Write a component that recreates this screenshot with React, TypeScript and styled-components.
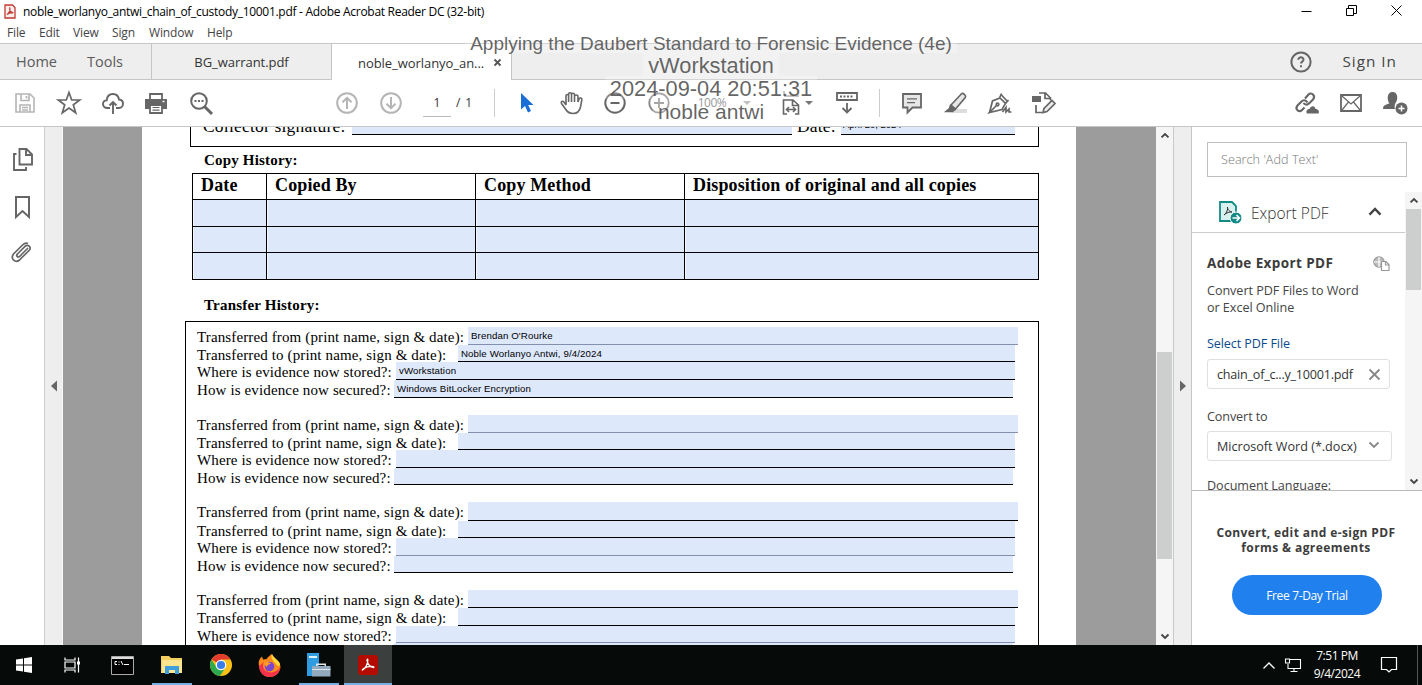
import React from "react";
import styled, { createGlobalStyle } from "styled-components";

const Global = createGlobalStyle`
  * { box-sizing: border-box; }
  html, body { margin: 0; padding: 0; background: #fff; overflow: hidden; }
  body { font-family: "Open Sans", "Noto Sans", sans-serif; }
  svg { display: block; flex: none; overflow: visible; }
`;

const ui = `"Open Sans", "Noto Sans", sans-serif`;
const serif = `"Liberation Serif", serif`;
const arial = `"Liberation Sans", sans-serif`;

const Window = styled.div`
  position: relative;
  width: 1422px;
  height: 685px;
  display: flex;
  flex-direction: column;
  background: #fff;
  overflow: hidden;
`;

const Label = styled.span<{ $size?: number; $ls?: number; $weight?: number; $color?: string; $drop?: number }>`
  font-size: ${(p) => p.$size ?? 12}px;
  letter-spacing: ${(p) => p.$ls ?? 0}px;
  font-weight: ${(p) => p.$weight ?? 400};
  color: ${(p) => p.$color ?? "#333"};
  padding-top: ${(p) => p.$drop ?? 0}px;
  white-space: nowrap;
  line-height: 1;
`;

/* ---------- title and menu ---------- */
const TitleBar = styled.header`
  height: 23px;
  display: flex;
  align-items: center;
  padding-left: 4px;
  gap: 7px;
`;
const WindowButtons = styled.div`
  display: flex;
  margin-left: auto;
  gap: 34px;
  padding-right: 20px;
  margin-top: -2px;
`;
const MenuBar = styled.nav`
  height: 20px;
  display: flex;
  align-items: center;
  padding-left: 7px;
`;
const MenuItem = styled.span<{ $w: number }>`
  width: ${(p) => p.$w}px;
  font-size: 12px;
  line-height: 1;
  letter-spacing: -0.15px;
  color: #444;
`;

/* ---------- tabs ---------- */
const TabBar = styled.div`
  height: 37px;
  display: flex;
  background: #eee;
  border-top: 1px solid #c6c6c6;
  border-bottom: 1px solid #c6c6c6;
`;
const FixedTabs = styled.div`
  width: 152px;
  display: flex;
  align-items: center;
  padding-left: 16px;
  gap: 30px;
  border-right: 1px solid #c6c6c6;
`;
const Tab = styled.div<{ $active?: boolean }>`
  position: relative;
  width: 180px;
  display: flex;
  align-items: center;
  justify-content: center;
  background: ${(p) => (p.$active ? "#fff" : "#eee")};
  border-right: 1px solid #c6c6c6;
  margin-bottom: ${(p) => (p.$active ? "-1px" : "0")};
  ${(p) => p.$active && "justify-content: flex-start; padding-left: 26px; gap: 10px;"}
`;
const Account = styled.div`
  margin-left: auto;
  display: flex;
  align-items: center;
  gap: 30px;
  padding-right: 25px;
`;

/* ---------- toolbar ---------- */
const Toolbar = styled.div`
  height: 47px;
  display: flex;
  align-items: center;
  padding-left: 3px;
  border-bottom: 1px solid #c6c6c6;
`;
const Slot = styled.div<{ $w?: number; $gap?: number }>`
  width: ${(p) => p.$w ?? 44}px;
  margin-left: ${(p) => p.$gap ?? 0}px;
  height: 46px;
  flex: none;
  display: flex;
  align-items: center;
  justify-content: center;
`;
const PageBox = styled.div`
  width: 28px;
  height: 27px;
  margin-left: 10px;
  display: flex;
  align-items: center;
  justify-content: center;
  border-bottom: 1px solid #bbb;
`;
const Divider = styled.div<{ $gap: number }>`
  width: 1px;
  height: 28px;
  margin-left: ${(p) => p.$gap}px;
  background: #ccc;
`;
const Caret = styled.i<{ $color?: string }>`
  border: 4px solid transparent;
  border-top: 4px solid ${(p) => p.$color ?? "#777"};
  border-bottom: 0;
`;

/* ---------- body ---------- */
const Body = styled.main`
  height: 518px;
  display: flex;
`;
const Rail = styled.aside`
  width: 45px;
  border-right: 1px solid #ccc;
  display: flex;
  flex-direction: column;
  align-items: center;
  padding-top: 21px;
  gap: 22px;
`;
const Gutter = styled.div<{ $side: "left" | "right" }>`
  width: 18px;
  background: #eee;
  border-${(p) => p.$side}: 1px solid ${(p) => (p.$side === "left" ? "#c9c9c9" : "#f8f8f8")};
  display: flex;
  align-items: center;
  justify-content: center;
`;
const Backdrop = styled.div`
  width: 1093px;
  padding: 0 80px 0 79px;
  background: #9c9c9c;
`;
const Paper = styled.div`
  height: 518px;
  background: #fff;
  overflow: hidden;
  font-family: ${serif};
  color: #000;
`;
const CollectorBox = styled.div`
  margin-left: 48px;
  width: 849px;
  height: 20px;
  border: 1px solid #000;
  border-top: 0;
  display: flex;
  padding-left: 12px;
`;
const CollectorText = styled.span<{ $w: number }>`
  width: ${(p) => p.$w}px;
  height: 19px;
  overflow: hidden;
  font-size: 17.5px;
  letter-spacing: 0.2px;
  line-height: 18px;
  margin-top: -10px;
  white-space: nowrap;
`;
const CollectorField = styled.span<{ $w: number }>`
  width: ${(p) => p.$w}px;
  height: 8px;
  overflow: hidden;
  background: #dde8fb;
  border-bottom: 1px solid #000;
  font: 9.5px/10px ${arial};
  margin-right: 5px;
  padding-left: 2px;
`;
const Shift = styled.span`
  display: block;
  margin-top: -7px;
`;
const SectionTitle = styled.h2<{ $h: number; $pad: number; $ls: number }>`
  margin: 0;
  height: ${(p) => p.$h}px;
  padding: ${(p) => p.$pad}px 0 0 62px;
  font-size: 15px;
  line-height: 17px;
  letter-spacing: ${(p) => p.$ls}px;
  font-weight: 700;
`;
const CopyTable = styled.div`
  margin-left: 50px;
  width: 847px;
  height: 107px;
  display: grid;
  grid-template-columns: 73px 208px 208px 353px;
  grid-template-rows: 25px 26px 25px 26px;
  gap: 1px;
  background: #000;
  border: 1px solid #000;
`;
const HeadCell = styled.div`
  background: #fff;
  padding-left: 8px;
  font-size: 18px;
  line-height: 22px;
  letter-spacing: 0.13px;
  font-weight: 700;
  white-space: nowrap;
`;
const FieldCell = styled.div`
  background: #dde8fb;
  border: 1px solid #f3f6fd;
  border-width: 0 0 0 1px;
`;
const TransferBox = styled.div`
  margin-left: 43px;
  width: 854px;
  height: 400px;
  border: 1px solid #000;
  padding: 5px 0 0 11px;
`;
const TransferGroup = styled.div`
  margin-bottom: 17px;
`;
const TransferRow = styled.div<{ $h: number }>`
  height: ${(p) => p.$h}px;
  display: flex;
`;
const TransferLabel = styled.span<{ $w: number; $ls: number }>`
  width: ${(p) => p.$w}px;
  flex: none;
  font-size: 15px;
  line-height: 20px;
  letter-spacing: ${(p) => p.$ls}px;
  white-space: nowrap;
`;
const TransferField = styled.span<{ $w: number; $soft?: boolean }>`
  width: ${(p) => p.$w}px;
  padding-left: 3px;
  background: #dde8fb;
  border-bottom: 1px solid ${(p) => (p.$soft ? "#8290ad" : "#000")};
  font: 9.7px/17px ${arial};
  letter-spacing: 0.11px;
  white-space: nowrap;
`;

/* ---------- scrollbars ---------- */
const Scroll = styled.div<{ $w: number; $h: number }>`
  width: ${(p) => p.$w}px;
  height: ${(p) => p.$h}px;
  flex: none;
  background: #f5f5f5;
  display: flex;
  flex-direction: column;
  align-items: center;
`;
const Thumb = styled.div<{ $top: number; $h: number }>`
  width: 15px;
  height: ${(p) => p.$h}px;
  margin-top: ${(p) => p.$top}px;
  background: #cdcfcf;
`;
const ScrollEnd = styled.div<{ $bottom?: boolean }>`
  height: 17px;
  display: flex;
  align-items: center;
  ${(p) => p.$bottom && "margin-top: auto;"}
`;

/* ---------- right panel ---------- */
const Panel = styled.aside`
  width: 231px;
  border-left: 1px solid #c6c6c6;
  background: #fff;
`;
const SearchBox = styled.div`
  width: 200px;
  height: 35px;
  margin: 15px 0 0 15px;
  padding-left: 13px;
  border: 1px solid #bfbfbf;
  display: flex;
  align-items: center;
`;
const PanelScroll = styled.div`
  height: 299px;
  margin-top: 15px;
  display: flex;
  overflow: hidden;
  border-bottom: 1px solid #bbb;
`;
const PanelMain = styled.div`
  width: 213px;
  flex: none;
`;
const ExportHead = styled.div`
  height: 41px;
  display: flex;
  align-items: center;
  padding: 0 24px 0 27px;
  border-bottom: 1px solid #ccc;
`;
const ExportTitle = styled.span`
  flex: 1;
  padding: 1px 0 0 9px;
  font-size: 15.5px;
  font-weight: 300;
  color: #333;
  line-height: 20px;
`;
const ExportBody = styled.div`
  padding: 22px 0 0 15px;
  display: flex;
  flex-direction: column;
`;
const HeadingRow = styled.div`
  display: flex;
  justify-content: space-between;
  align-items: center;
  height: 17px;
  padding-right: 15px;
`;
const Para = styled.p<{ $top: number; $color?: string; $ls?: number }>`
  margin: ${(p) => p.$top}px 0 0;
  font-size: 12.6px;
  line-height: 17px;
  letter-spacing: ${(p) => p.$ls ?? -0.04}px;
  color: ${(p) => p.$color ?? "#444"};
  white-space: nowrap;
`;
const Picker = styled.div<{ $w: number; $top: number }>`
  width: ${(p) => p.$w}px;
  height: 30px;
  margin-top: ${(p) => p.$top}px;
  padding: 0 8px 0 9px;
  border: 1px solid #e0e0e0;
  border-radius: 3px;
  display: flex;
  align-items: center;
  justify-content: space-between;
`;
const ChevronSlot = styled.span`
  padding: 0 4px 2px 0;
`;
const Promo = styled.div`
  display: flex;
  flex-direction: column;
  align-items: center;
  padding: 34px 0 0;
`;
const PromoText = styled.p`
  margin: 0 2px 0 0;
  font-size: 12px;
  line-height: 15px;
  font-weight: 700;
  letter-spacing: 0.4px;
  color: #3c3c3c;
  text-align: center;
  white-space: nowrap;
`;
const TrialButton = styled.button`
  width: 150px;
  height: 40px;
  margin-top: 20px;
  border: 0;
  border-radius: 20px;
  background: #2080ee;
  color: #fff;
  font: 12px ${ui};
  letter-spacing: -0.35px;
`;

/* ---------- watermark ---------- */
const Watermark = styled.div`
  position: absolute;
  left: 465px;
  top: 30px;
  width: 492px;
  display: flex;
  flex-direction: column;
  align-items: center;
  font-family: ${arial};
  color: rgba(80, 80, 80, 0.88);
`;
const Mark = styled.div<{ $size: number; $lh?: number }>`
  height: 23px;
  padding: 0 5px;
  font-size: ${(p) => p.$size}px;
  line-height: ${(p) => p.$lh ?? 26}px;
  white-space: nowrap;
  background: rgba(255, 255, 255, 0.25);
`;

/* ---------- taskbar ---------- */
const Taskbar = styled.footer`
  height: 40px;
  display: flex;
  background: #060a09;
`;
const TaskItem = styled.div<{ $w?: number; $run?: boolean; $active?: boolean }>`
  width: ${(p) => p.$w ?? 49}px;
  display: flex;
  align-items: center;
  justify-content: center;
  ${(p) => p.$run && "box-shadow: inset 0 -2px 0 #74b0e4; margin: 0 4.5px; width: 40px;"}
  ${(p) => p.$active && "background: #3b3f3e; width: 48px; margin: 0 0 0 1px;"}
`;
const Tray = styled.div`
  margin-left: auto;
  display: flex;
  align-items: center;
`;
const Clock = styled.div`
  width: 62px;
  margin: 0 13px 0 5px;
  display: flex;
  flex-direction: column;
  align-items: center;
  font-size: 12px;
  line-height: 18px;
  letter-spacing: -0.45px;
  color: #fff;
`;
const ShowDesktop = styled.div`
  width: 5px;
  height: 40px;
  margin-left: 20px;
  border-left: 1px solid #555;
`;

type IconProps = { w?: number; h?: number; sw?: number; color?: string; children: React.ReactNode };
const Icon = ({ w = 24, h = 24, sw = 2, color = "#666", children }: IconProps) => (
  <svg width={w} height={h} viewBox={`0 0 ${w} ${h}`} fill="none" stroke={color} strokeWidth={sw}>
    {children}
  </svg>
);

const Chevron = ({ up, s = 8, color = "#444", sw = 1.8 }: { up?: boolean; s?: number; color?: string; sw?: number }) => (
  <Icon w={s} h={s * 0.6} color={color} sw={sw}>
    <path d={up ? `M.5 ${s * 0.55}L${s / 2} 1L${s - 0.5} ${s * 0.55}` : `M.5 .5L${s / 2} ${s * 0.5}L${s - 0.5} .5`} />
  </Icon>
);

const rows = [
  { label: "Transferred from (print name, sign & date):", lw: 271, w: 550, ls: 0.13 },
  { label: "Transferred to (print name, sign & date):", lw: 261, w: 557, ls: 0.13 },
  { label: "Where is evidence now stored?:", lw: 199, w: 619, ls: 0.11 },
  { label: "How is evidence now secured?:", lw: 197, w: 619, ls: 0.13 },
];
const groups = [
  { heights: [18, 17, 18, 18], soft: 0, values: ["Brendan O'Rourke", "Noble Worlanyo Antwi, 9/4/2024", "vWorkstation", "Windows BitLocker Encryption"] },
  { heights: [18, 17, 18, 17], soft: 0, values: [] },
  { heights: [19, 17, 18, 17], soft: 2, values: [] },
  { heights: [18, 18, 17, 18], soft: 2, values: [] },
];

export default function App() {
  return (
    <>
      <Global />
      <Window>
        <TitleBar>
          <Icon w={12} h={15} color="#c0392f" sw={1.3}>
            <path d="M1 1H8.500L11 3.500V14H1Z" fill="#fbeeee" />
            <path d="M3 10.500C5 9.500 6.500 6.500 5.800 4.500C5.300 6.500 7.500 9 9.200 8.700C7.500 8.300 4.500 9.200 3 10.500Z" />
          </Icon>
          <Label $size={12} $color="#000" $ls={-0.29}>
            noble_worlanyo_antwi_chain_of_custody_10001.pdf - Adobe Acrobat Reader DC (32-bit)
          </Label>
          <WindowButtons>
            <Icon w={11} h={11} color="#000" sw={1}><path d="M.5 6.500H10.500" /></Icon>
            <Icon w={11} h={11} color="#000" sw={1}><path d="M.5 3.500H7.500V10.500H.5ZM2.500 3V.5H10.500V8.500H8" /></Icon>
            <Icon w={11} h={11} color="#000" sw={1}><path d="M.5 .5L10.500 10.500M10.500 .5L.5 10.500" /></Icon>
          </WindowButtons>
        </TitleBar>
        <MenuBar>
          <MenuItem $w={32}>File</MenuItem>
          <MenuItem $w={34}>Edit</MenuItem>
          <MenuItem $w={39}>View</MenuItem>
          <MenuItem $w={37}>Sign</MenuItem>
          <MenuItem $w={58}>Window</MenuItem>
          <MenuItem $w={40}>Help</MenuItem>
        </MenuBar>

        <TabBar>
          <FixedTabs>
            <Label $size={14.5} $color="#5a5a5a" $drop={1}>Home</Label>
            <Label $size={14.5} $color="#5a5a5a" $drop={1}>Tools</Label>
          </FixedTabs>
          <Tab><Label $size={13} $ls={-0.05} $drop={2}>BG_warrant.pdf</Label></Tab>
          <Tab $active>
            <Label $size={13} $ls={-0.05} $drop={2}>noble_worlanyo_an...</Label>
            <Icon w={7} h={7} color="#555" sw={1.8}><path d="M.5 .5L6.500 6.500M6.500 .5L.5 6.500" /></Icon>
          </Tab>
          <Account>
            <Icon w={22} h={22} color="#666">
              <circle cx="11" cy="11" r="9.600" />
              <path d="M8.300 8.700C8.300 5.500 13.700 5.600 13.500 8.800C13.400 10.600 11 10.700 11 12.600M11 14.200V16.200" />
            </Icon>
            <Label $size={15.3} $ls={1} $color="#444" $drop={1}>Sign In</Label>
          </Account>
        </TabBar>

        <Toolbar>
          <Slot>
            <Icon w={20} h={20} color="#b5b5b5" sw={1.6}>
              <path d="M1 1H15L19 5V19H1ZM6 1V7.500H14V1M5 19V12H15V19M11.500 3V5.500M7 14.500H13M7 17H13" />
            </Icon>
          </Slot>
          <Slot>
            <Icon w={24} h={24} sw={1.7}>
              <path d="M12 1.500L14.700 9H22.700L16.300 13.800L18.700 21.800L12 17L5.300 21.800L7.700 13.800L1.300 9H9.300Z" />
            </Icon>
          </Slot>
          <Slot>
            <Icon w={22} h={21} sw={1.9}>
              <path d="M8 15H5.500C2.500 15 1 13 1 11C1 9 2.500 7.500 4.700 7.400C5 3.500 7.500 1 11 1C14.500 1 16.500 3.500 17 6.500C19.500 6.700 21 8.500 21 10.800C21 13 19.500 15 17 15H14M11 21V9M7.500 12.500L11 9L14.500 12.500" />
            </Icon>
          </Slot>
          <Slot $w={42}>
            <Icon w={22} h={21} sw={1.8}>
              <path d="M5 6V1H17V6" />
              <path d="M0 6H22V16H0Z" fill="#666" stroke="none" />
              <path d="M5 12H17V20H5Z" fill="#fff" />
              <path d="M7.500 14.500H14.500M7.500 17.200H14.500" strokeWidth="1.200" />
              <path d="M17.500 8.500H19.500" stroke="#fff" strokeWidth="1.500" />
            </Icon>
          </Slot>
          <Slot $gap={2}>
            <Icon w={23} h={23} sw={2}>
              <circle cx="9" cy="9" r="7.800" />
              <path d="M14.500 14.500L22 22" strokeWidth="3" />
              <path d="M4.500 9H6.500M8 9H10M11.500 9H13.500" />
            </Icon>
          </Slot>
          <Slot $gap={102}>
            <Icon w={22} h={22} color="#b5b5b5"><circle cx="11" cy="11" r="9.800" /><path d="M11 17V6M6.500 10.300L11 5.800L15.500 10.300" /></Icon>
          </Slot>
          <Slot>
            <Icon w={22} h={22} color="#b5b5b5"><circle cx="11" cy="11" r="9.800" /><path d="M11 5V16M6.500 11.700L11 16.200L15.500 11.700" /></Icon>
          </Slot>
          <PageBox><Label $size={12}>1</Label></PageBox>
          <Slot $w={27}><Label $size={12} $ls={0.9}>/ 1</Label></Slot>
          <Divider $gap={16} />
          <Slot $gap={10}>
            <Icon w={14} h={20}><path d="M1 0V16.500L5 13L8 19.500L11 18L8.200 12H13.500Z" fill="#1a6fd6" stroke="none" /></Icon>
          </Slot>
          <Slot>
            <Icon w={23} h={24} sw={1.6}>
              <path d="M6 14V5C6 3 8.600 3 8.600 5V11M8.600 10V3.300C8.600 1.300 11.500 1.300 11.500 3.300V11M11.500 10V3.800C11.500 1.800 14.500 1.800 14.500 3.800V11M14.500 10V5.500C14.500 3.500 18 3.500 18 5.500V11L19 8C20 6.300 22.200 7 21.800 9L20.500 16C19.500 20.500 17 22.500 13 22.500C9.500 22.500 7.500 21.500 5.500 18L1.500 12.500C.5 10.500 2.500 9.500 4 11L6 14" />
            </Icon>
          </Slot>
          <Slot><Icon w={22} h={22}><circle cx="11" cy="11" r="9.700" /><path d="M6.500 11H15.500" /></Icon></Slot>
          <Slot><Icon w={22} h={22} color="#888" sw={1.8}><circle cx="11" cy="11" r="9.700" /><path d="M6 11H16M11 6V16" /></Icon></Slot>
          <Slot $w={62}><Label $size={12} $ls={-0.5} $color="#777">100%</Label></Slot>
          <Caret $color="#aaa" />
          <Slot $gap={26} $w={28}>
            <Icon w={18} h={24} sw={1.8}>
              <path d="M2 0V5H17" strokeWidth="1" />
              <path d="M5 23H1.500V9H11L16.500 14V23H13M10.500 9V14.500H16M5 18.500H13M7 16L4.500 18.500L7 21M11 16L13.500 18.500L11 21" strokeWidth="1.600" />
            </Icon>
          </Slot>
          <Caret />
          <Slot $gap={12}>
            <Icon w={22} h={22} sw={1.8}>
              <path d="M1 1H21V8H1ZM11 11V20M6.500 16L11 20.500L15.500 16" />
              <path d="M4 4.500H18" strokeDasharray="2 1.500" />
            </Icon>
          </Slot>
          <Divider $gap={10} />
          <Slot $gap={10}>
            <Icon w={20} h={21} sw={1.8}>
              <path d="M1 1H19V14.500H10.500L5.500 19.500V14.500H1Z" fill="#e6e6e6" /><path d="M5 5.800H15M5 9.700H13" strokeWidth="1.300" />
            </Icon>
          </Slot>
          <Slot>
            <Icon w={22} h={22} sw={1.6}>
              <path d="M10 17H22V21H6Z" fill="#ddd" stroke="none" />
              <path d="M6 13L16.500 1.800C18 .5 21.500 3.500 20.300 5.500L10.500 17Z" fill="#e6e6e6" />
              <path d="M5.500 13.500L10 17.500L7.500 19.500H1L4.500 16.500Z" fill="#666" />
            </Icon>
          </Slot>
          <Slot>
            <Icon w={24} h={22} sw={1.7}>
              <path d="M1.500 20.500L4.500 9L12 6L17.500 11.500L14 17.500L1.500 20.500L8.500 13.500M11.500 6L13.500 1.500M17.500 11.500L20.500 8M13 2.500L19.500 9.500M14.500 20L18 15.500V20L21 17V20H23.500" />
              <circle cx="9.500" cy="12.500" r="1.300" />
            </Icon>
          </Slot>
          <Slot>
            <Icon w={24} h={22} sw={1.7}>
              <path d="M7 1H13.500L18.500 6V8.500M13 1V6.500H18M4 13V20.500H10" />
              <path d="M0 4H9V10H0Z" fill="#666" stroke="none" />
              <path d="M11 20.500L12 16.500L20 8.500L23 11.500L15 19.500Z" fill="#eee" />
            </Icon>
          </Slot>
          <Slot $gap={219}>
            <Icon w={24} h={22} sw={2.1}>
              <path d="M10 6.500L13.500 2.500C16.500 -.5 21 4 18 7.500L14 11.500C12 13.500 9.500 12.500 8.500 11M12.500 10.500C10.500 7.500 8 8 6.500 9.500L2.500 13.500C-.5 17 4 21 7 18L9.500 15.500" />
              <path d="M12 21.500C10 18.500 13.500 16.500 14.500 17C16 12.500 20.500 14 20.500 17C23.500 17 24.500 19.500 23.500 21.500Z" fill="#666" stroke="none" />
            </Icon>
          </Slot>
          <Slot>
            <Icon w={22} h={18} sw={1.8}><path d="M1 1H21V17H1Z" /><path d="M2 2L11 10L20 2M2 16L8.500 8M20 16L13.500 8" strokeWidth="1.200" /></Icon>
          </Slot>
          <Slot>
            <Icon w={25} h={24}>
              <path d="M0 18C0 14 3 13.500 6.500 12.500C4 9.500 3.500 1 9.500 1C15.500 1 15 9.500 12.500 12C11.500 14 11.500 16 12 18Z" fill="#666" stroke="none" />
              <circle cx="18.500" cy="17.500" r="6" fill="#666" stroke="none" />
              <path d="M15.500 17.500H21.500M18.500 14.500V20.500" stroke="#fff" strokeWidth="1.500" />
            </Icon>
          </Slot>
        </Toolbar>

        <Body>
          <Rail>
            <Icon w={18} h={24} sw={1.9}>
              <path d="M6.500 1H13.500L19 6.500V16.500H6.500ZM13 1V7H19M3.500 6H1V22H13V19" />
            </Icon>
            <Icon w={17} h={26} sw={2}><path d="M2 3H15V23L8.500 17L2 23Z" /></Icon>
            <Icon w={22} h={21} sw={1.7}>
              <path d="M17 6L8.500 14.500C6.500 16 4.800 13.500 6.500 12L14.500 4C17 2 20.500 5 18.500 8L8.500 18C4.500 21.500 -1 17 2.500 12L11.500 3C13 1.500 15 .5 17 1.500" />
            </Icon>
          </Rail>
          <Gutter $side="right"><Icon w={6} h={11}><path d="M6 -.5V10.500L0 5Z" fill="#666" stroke="none" /></Icon></Gutter>
          <Backdrop>
            <Paper>
              <CollectorBox>
                <CollectorText $w={149}>Collector signature:</CollectorText>
                <CollectorField $w={440} />
                <CollectorText $w={44}>Date:</CollectorText>
                <CollectorField $w={174}><Shift>April 20, 2024</Shift></CollectorField>
              </CollectorBox>
              <SectionTitle $h={26} $pad={5} $ls={0.18}>Copy History:</SectionTitle>
              <CopyTable>
                {["Date", "Copied By", "Copy Method", "Disposition of original and all copies"].map((h) => (
                  <HeadCell key={h}>{h}</HeadCell>
                ))}
                {Array.from({ length: 12 }, (_, i) => <FieldCell key={i} />)}
              </CopyTable>
              <SectionTitle $h={41} $pad={17} $ls={0.2}>Transfer History:</SectionTitle>
              <TransferBox>
                {groups.map((g, gi) => (
                  <TransferGroup key={gi}>
                    {rows.map((r, i) => (
                      <TransferRow key={i} $h={g.heights[i]}>
                        <TransferLabel $w={r.lw} $ls={r.ls}>{r.label}</TransferLabel>
                        <TransferField $w={r.w} $soft={g.soft === i}>{g.values[i]}</TransferField>
                      </TransferRow>
                    ))}
                  </TransferGroup>
                ))}
              </TransferBox>
            </Paper>
          </Backdrop>
          <Scroll $w={17} $h={518}>
            <ScrollEnd><Chevron up /></ScrollEnd>
            <Thumb $top={208} $h={207} />
            <ScrollEnd $bottom><Chevron /></ScrollEnd>
          </Scroll>
          <Gutter $side="left"><Icon w={6} h={11}><path d="M0 -.5V10.500L6 5Z" fill="#666" stroke="none" /></Icon></Gutter>
          <Panel>
            <SearchBox><Label $size={12.6} $color="#777" $drop={2} $ls={0.05} $weight={300}>Search 'Add Text'</Label></SearchBox>
            <PanelScroll>
              <PanelMain>
                <ExportHead>
                  <Icon w={23} h={23} color="#148a86" sw={1.8}>
                    <path d="M1 1H13L17 5V20H1Z" fill="#d8f0ee" />
                    <path d="M5 14C8 12 9 8 8.500 6C8 8 11 11 13 11C10.500 10.500 7 12 5 14Z" stroke="#333" strokeWidth="1" />
                    <circle cx="17" cy="17" r="6" fill="#148a86" stroke="#fff" strokeWidth="1" />
                    <path d="M13.500 17H20M17.500 14L20.500 17L17.500 20" stroke="#fff" strokeWidth="1.500" />
                  </Icon>
                  <ExportTitle>Export PDF</ExportTitle>
                  <Chevron up s={12} sw={2.4} />
                </ExportHead>
                <ExportBody>
                  <HeadingRow>
                    <Label $size={13.5} $weight={700} $ls={0.4} $color="#3c3c3c">Adobe Export PDF</Label>
                    <Icon w={17} h={16} color="#999" sw={1.2}>
                      <circle cx="6" cy="6" r="5.200" fill="#bbb" /><path d="M1 6H11M6 1V11" stroke="#fff" />
                      <path d="M8.500 5.500H13L16 8.500V14.500H8.500ZM12.500 5.500V9H16" fill="#fff" />
                    </Icon>
                  </HeadingRow>
                  <Para $top={10}>Convert PDF Files to Word<br />or Excel Online</Para>
                  <Para $top={19} $color="#0d4a8c" $ls={-0.1}>Select PDF File</Para>
                  <Picker $w={183} $top={7}>
                    <Label $size={12.6} $ls={-0.23} $drop={2}>chain_of_c...y_10001.pdf</Label>
                    <ChevronSlot><Icon w={11} h={11} color="#888" sw={1.8}><path d="M3.500 1.500L13.500 11.500M13.500 1.500L3.500 11.500" /></Icon></ChevronSlot>
                  </Picker>
                  <Para $top={19} $ls={-0.1}>Convert to</Para>
                  <Picker $w={185} $top={6}>
                    <Label $size={12.6} $drop={3}>Microsoft Word (*.docx)</Label>
                    <ChevronSlot><Chevron s={10} color="#888" /></ChevronSlot>
                  </Picker>
                  <Para $top={16}>Document Language:</Para>
                </ExportBody>
              </PanelMain>
              <Scroll $w={17} $h={298}>
                <ScrollEnd><Chevron up /></ScrollEnd>
                <Thumb $top={0} $h={81} />
                <ScrollEnd $bottom><Chevron /></ScrollEnd>
              </Scroll>
            </PanelScroll>
            <Promo>
              <PromoText>Convert, edit and e-sign PDF<br />forms &amp; agreements</PromoText>
              <TrialButton>Free 7-Day Trial</TrialButton>
            </Promo>
          </Panel>
        </Body>

        <Taskbar>
          <TaskItem $w={48}>
            <Icon w={16} h={16}><path d="M0 2.500L7 1.500V7.500H0ZM8 1.300L16 0V7.500H8ZM0 8.500H7V14.500L0 13.500ZM8 8.500H16V16L8 14.700Z" fill="#fff" stroke="none" /></Icon>
          </TaskItem>
          <TaskItem $w={49}>
            <Icon w={17} h={16} color="#fff" sw={1.2}><path d="M1 .5V3H11V.5M1 5H11V11H1ZM1 15.500V13H11V15.500M14.500 .5V15.500" /><path d="M13 4.500H16V7.500H13Z" fill="#fff" stroke="none" /></Icon>
          </TaskItem>
          <TaskItem $w={50}>
            <Icon w={23} h={19} color="#aaa" sw={1}>
              <path d="M.5 .5H22.500V18.500H.5Z" fill="#000" /><path d="M1 2H22" stroke="#ddd" strokeWidth="2" />
              <path d="M6 5.500H4V8.500H6M8 5.500V6.500M8 8V9M10 5L12 9M13 8.500H18" stroke="#fff" />
            </Icon>
          </TaskItem>
          <TaskItem $run>
            <Icon w={22} h={20}>
              <path d="M0 1H8L10 3H21V18H0Z" fill="#f5cf5d" stroke="none" /><path d="M1 5H21V18H1Z" fill="#fde58f" stroke="none" />
              <path d="M4 19V11H18V19H14V15H8V19Z" fill="#3f9fdc" stroke="none" />
            </Icon>
          </TaskItem>
          <TaskItem $w={49}>
            <Icon w={22} h={22}>
              <g stroke="none"><circle cx="11" cy="11" r="11" fill="#fbc116" />
                <path d="M11 11L1.500 5.500A11 11 0 0 1 20.500 5.500H11Z" fill="#e33b2e" />
                <path d="M1.500 5.500A11 11 0 0 0 10 22L15.500 13.500L11 11L6.500 13.500Z" fill="#2da94f" />
                <circle cx="11" cy="11" r="5.300" fill="#fff" /><circle cx="11" cy="11" r="4.100" fill="#3b7de8" /></g>
            </Icon>
          </TaskItem>
          <TaskItem $w={49}>
            <Icon w={23} h={23}>
              <g stroke="none"><path d="M1 12C0 7 2 4 4 2.500L5 5.500L8.500 5C10 3 12 1 14 0C15 4 20 5 22 10C24 17 18 23 11.500 23C6 23 2 19 1 12Z" fill="#ff8a1c" />
                <path d="M1 12C1.500 19 6 23 11.500 23C18 23 22 18 22.500 13C19 18 13 20 8 17C5 15 4 11 6 8Z" fill="#f5324a" />
                <path d="M14 0C15 4 20 5 22 10C22 12 20 13 18 10C16 7 12 5 14 0Z" fill="#ffd93b" />
                <circle cx="11.500" cy="12.500" r="4.800" fill="#7a45d0" /><path d="M6 8C9 7 11 9 13 9C12 11 9 10 9 13C7 12 6 10 6 8Z" fill="#ff9d2a" /></g>
            </Icon>
          </TaskItem>
          <TaskItem $run>
            <Icon w={25} h={24}>
              <g stroke="none"><path d="M1 0H13V23H1Z" fill="#2f9be0" /><path d="M3 3H11V5H3Z" fill="#dff1ff" />
                <path d="M6 13H24.500V23.500H6Z" fill="#93a9bd" /><path d="M10 13V10.500H20V13H18.500V12H11.500V13ZM6 16H24.500V17H6Z" fill="#dfe7ee" /></g>
            </Icon>
          </TaskItem>
          <TaskItem $run $active>
            <Icon w={20} h={20} color="#fff" sw={1.3}>
              <rect width="20" height="20" rx="3" fill="#b30b00" stroke="none" />
              <path d="M4.500 15C7.500 13.500 10.300 8 9.800 4.500C9.500 3.500 8.800 4.500 9.100 5.800C9.600 9 12.500 12.500 15.500 12.500C16.500 12 15.500 11.300 14 11.300C11 11.300 6.500 12.500 4.500 14.500Z" />
            </Icon>
          </TaskItem>
          <Tray>
            <Icon w={12} h={7} color="#fff" sw={1.3}><path d="M.5 6.500L6 1L11.500 6.500" /></Icon>
            <Slot $w={16} $gap={10}>
              <Icon w={16} h={14} color="#fff" sw={1.1}><path d="M5 1.500H15.500V10.500H3V6M9 10.500V13.500M5.500 13.500H12.500M.5 1H4.500V5H.5Z" /></Icon>
            </Slot>
            <Clock><span>7:51 PM</span><span>9/4/2024</span></Clock>
            <Icon w={16} h={16} color="#fff" sw={1.2}><path d="M.5 .5H15.500V12.500H10.500L8 15L5.500 12.500H.5Z" /></Icon>
            <ShowDesktop />
          </Tray>
        </Taskbar>

        <Watermark>
          <Mark $size={19} $lh={28}>Applying the Daubert Standard to Forensic Evidence (4e)</Mark>
          <Mark $size={21.8}>vWorkstation</Mark>
          <Mark $size={21.8}>2024-09-04 20:51:31</Mark>
          <Mark $size={21}>noble antwi</Mark>
        </Watermark>
      </Window>
    </>
  );
}
